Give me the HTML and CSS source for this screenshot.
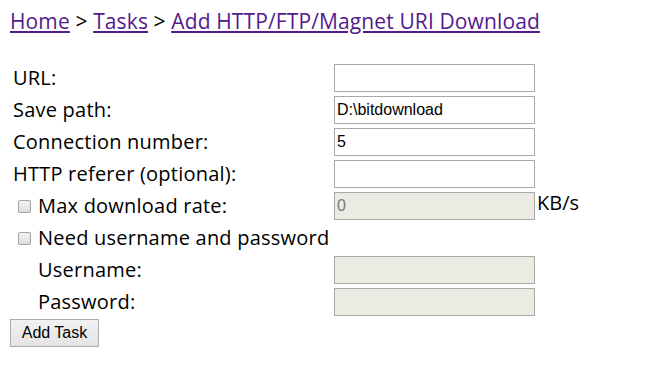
FILE: index.html
```html
<!DOCTYPE html>
<html lang="en">
<head>
    <meta charset="UTF-8">
    <meta name="viewport" content="width=device-width, initial-scale=1.0">
    <title>Add HTTP/FTP/Magnet URI Download</title>
    <link rel="stylesheet" href="styles.css">
</head>
<body>
    <div class="crumbs">
        <a href="#">Home</a> &gt; <a href="#">Tasks</a> &gt; <a href="#">Add HTTP/FTP/Magnet URI Download</a>
    </div>

    <form class="task-form">
        <label class="label">URL:</label>
        <div class="field"><input type="text" class="text"></div>

        <label class="label">Save path:</label>
        <div class="field"><input type="text" class="text" value="D:\bitdownload"></div>

        <label class="label">Connection number:</label>
        <div class="field"><input type="text" class="text" value="5"></div>

        <label class="label">HTTP referer (optional):</label>
        <div class="field"><input type="text" class="text"></div>

        <label class="label check"><input type="checkbox" class="box"> Max download rate:</label>
        <div class="field"><input type="text" class="text" value="0" disabled> <span class="unit">KB/s</span></div>

        <label class="label check wide"><input type="checkbox" class="box"> Need username and password</label>

        <label class="label sub">Username:</label>
        <div class="field"><input type="text" class="text" disabled></div>

        <label class="label sub">Password:</label>
        <div class="field"><input type="password" class="text" disabled></div>
    </form>
    <button type="button" class="add-btn">Add Task</button>
</body>
</html>
```

FILE: styles.css
```css
body {
    margin: 0;
    padding: 0 10px;
    font-family: "Open Sans", "Noto Sans", sans-serif;
    font-size: 20px;
    letter-spacing: 0.22px;
    color: #000;
    background: #fff;
}

.crumbs {
    margin-top: 8px;
    font-size: 21px;
    letter-spacing: 0.12px;
    line-height: 26px;
}

.crumbs a {
    color: #551a8b;
}

.task-form {
    margin-top: 28px;
    display: grid;
    grid-template-columns: 324px auto;
    grid-auto-rows: 32px;
    align-items: center;
}

.label {
    padding-left: 3px;
    line-height: 26px;
    white-space: nowrap;
}

.check {
    display: flex;
    align-items: center;
    padding-left: 8px;
}

.wide {
    grid-column: 1 / 3;
}

.sub {
    padding-left: 28px;
}

.box {
    appearance: none;
    -webkit-appearance: none;
    width: 13px;
    height: 13px;
    margin: 0 7px 0 0;
    border: 1px solid #a3a3a3;
    border-radius: 2px;
    background: linear-gradient(#f2f2f2, #dedede);
}

.field {
    display: flex;
    align-items: center;
}

.text {
    box-sizing: border-box;
    width: 201px;
    height: 28px;
    margin: 0;
    padding: 0 2px;
    border: 1px solid #a9a9a9;
    border-radius: 0;
    font-family: "Liberation Sans", Arial, sans-serif;
    font-size: 16px;
    letter-spacing: 0;
    color: #000;
    background: #fff;
    outline: none;
}

.text:disabled {
    background: #ebebe4;
    color: #7a7a7a;
}

.unit {
    margin-left: 2px;
    letter-spacing: 0;
    line-height: 26px;
    margin-top: -6px;
}

.add-btn {
    display: block;
    box-sizing: border-box;
    width: 89px;
    margin-top: 1px;
    height: 28px;
    padding: 0;
    border: 1px solid #adadad;
    border-radius: 0;
    background: linear-gradient(#f2f2f2, #e4e4e4);
    font-family: "Liberation Sans", Arial, sans-serif;
    font-size: 16px;
    color: #000;
}
```
